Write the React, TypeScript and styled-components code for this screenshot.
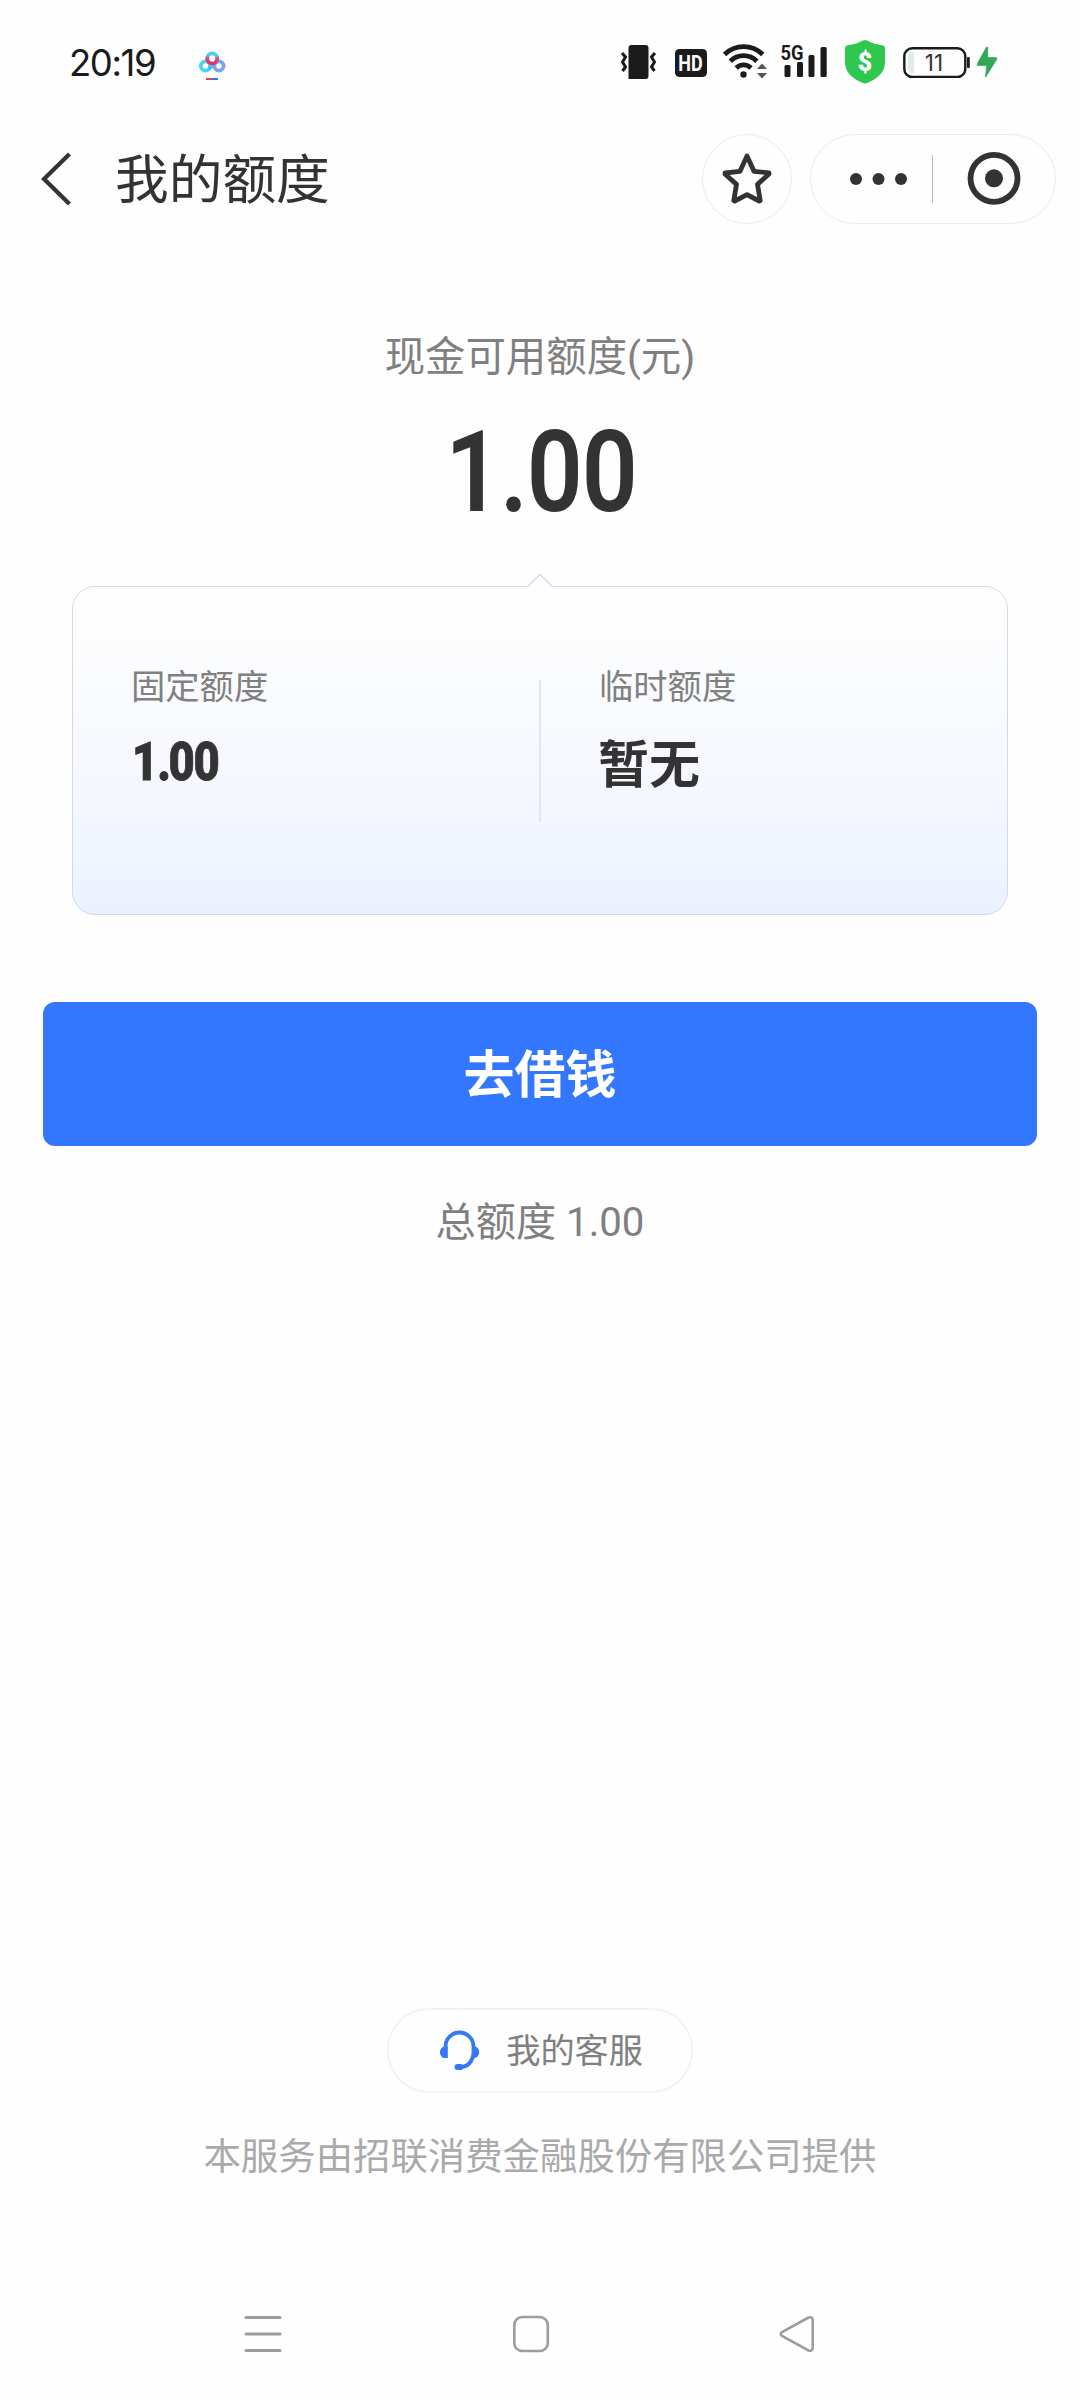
import React from "react";
import styled, { createGlobalStyle } from "styled-components";

const Global = createGlobalStyle`
  * { box-sizing: border-box; }
  body { margin: 0; background: #fefefe; }
`;

const Screen = styled.div`
  width: 1080px;
  height: 2400px;
  display: flex;
  flex-direction: column;
  background: #fefefe;
  color: #333;
  font-family: Roboto, "Noto Sans CJK SC", sans-serif;
  overflow: hidden;
`;

const StatusBar = styled.header`
  height: 124px;
  flex: none;
  padding: 0 81px 0 69px;
  display: flex;
  align-items: flex-start;
`;

const Clock = styled.div`
  width: 126px;
  padding-top: 39px;
  font: 430 36.5px/48px Inter, sans-serif;
  letter-spacing: -1.4px;
  color: #1a1a1a;
`;

const Spacer = styled.div`
  flex: 1;
`;

const StatusIcon = styled.svg<{ $gap?: number }>`
  display: block;
  flex: none;
  height: 60px;
  margin-top: 32px;
  margin-left: ${(p) => p.$gap ?? 0}px;
  overflow: visible;
`;

const HdBadge = styled.div`
  width: 32px;
  height: 28px;
  flex: none;
  margin: 49px 0 0 17px;
  border-radius: 4.5px;
  background: #1b1b1b;
  color: #fff;
  display: flex;
  align-items: center;
  justify-content: center;
  font: 700 20px/28px Roboto, sans-serif;
`;

const HdText = styled.span`
  transform: scale(0.9, 1.12);
`;

const TitleBar = styled.nav`
  height: 110px;
  flex: none;
  padding: 0 24px 0 38px;
  display: flex;
  align-items: center;
`;

const Title = styled.h1`
  margin: 0 auto 0 41px;
  padding-top: 3px;
  font-size: 53.7px;
  font-weight: 400;
  line-height: 80px;
`;

const RoundButton = styled.button<{ $width: number }>`
  width: ${(p) => p.$width}px;
  height: 90px;
  padding: 0;
  margin-left: 18px;
  border: 1px solid #ebebeb;
  border-radius: 45px;
  background: #fefefe;
  display: flex;
  align-items: center;
  justify-content: center;
`;

const Summary = styled.section`
  height: 352px;
  flex: none;
  display: flex;
  flex-direction: column;
  align-items: center;
  padding-top: 94px;
`;

const SummaryLabel = styled.div`
  font-size: 40.4px;
  line-height: 60px;
  color: #808080;
`;

const Amount = styled.div<{ $size: number; $squeeze: number; $weight: number; $outline: number }>`
  display: flex;
  width: max-content;
  font-family: Roboto, sans-serif;
  font-size: ${(p) => p.$size}px;
  font-weight: ${(p) => p.$weight};
  line-height: 1;
  transform: scaleX(${(p) => p.$squeeze});
  -webkit-text-stroke: ${(p) => p.$outline}px #333;
`;

const Glyph = styled.span<{ $width: number }>`
  width: ${(p) => p.$width}em;
  display: flex;
  justify-content: center;
`;

const MainAmount = styled.div`
  margin-top: 27px;
  padding-left: 2px;
`;

const Card = styled.section`
  position: relative;
  height: 329px;
  flex: none;
  margin: 0 72px;
  border: 1px solid #d3d9ea;
  border-radius: 23px;
  background: linear-gradient(#fefefe 8%, #f6f8fe 55%, #f1f5fe 80%, #eaf1fe);
  display: flex;
`;

const Pointer = styled.svg`
  position: absolute;
  left: 453px;
  top: -14px;
  display: block;
`;

const Column = styled.div`
  flex: 1;
  padding: 74px 0 0 58px;
`;

const ColumnLabel = styled.div`
  font-size: 34.3px;
  line-height: 52px;
  color: #808080;
`;

const NumberValue = styled.div`
  margin-top: 22px;
  display: flex;
  & > * {
    transform-origin: left center;
  }
`;

const TextValue = styled.div`
  margin: 15px 0 0 -1px;
  font-size: 51px;
  line-height: 76px;
  font-weight: 700;
`;

const Divider = styled.div`
  width: 2px;
  height: 142px;
  margin-top: 93px;
  background: #dfe7f3;
`;

const BorrowButton = styled.button`
  height: 144px;
  flex: none;
  margin: 87px 43px 0;
  padding: 0 0 6px;
  border: 0;
  border-radius: 12px;
  background: #3377ff;
  color: #fff;
  font: 700 51px/76px "Noto Sans CJK SC", sans-serif;
`;

const Total = styled.div`
  margin-top: 47px;
  font-size: 40.2px;
  line-height: 60px;
  text-align: center;
  color: #808080;
`;

const Footer = styled.footer`
  display: flex;
  flex-direction: column;
  align-items: center;
`;

const ServiceButton = styled.button`
  width: 306px;
  height: 85px;
  padding: 0 48px 5px 50px;
  border: 2px solid #f3f3f3;
  border-radius: 42px;
  background: #fefefe;
  display: flex;
  align-items: center;
  justify-content: space-between;
  color: #808080;
  font: 400 34.2px/52px "Noto Sans CJK SC", sans-serif;
`;

const ServiceIcon = styled.svg`
  display: block;
  margin-top: 6px;
`;

const Provider = styled.div`
  margin-top: 36px;
  font-size: 37.4px;
  line-height: 56px;
  color: #aaa;
`;

const SystemNav = styled.div`
  margin-top: 129px;
  height: 86px;
  flex: none;
  padding: 0 264px 0 243px;
  display: flex;
  justify-content: space-between;
`;

const ink = "#1b1b1b";

function Money({ size, squeeze, weight, outline = 0, one, dot, zero }: {
  size: number; squeeze: number; weight: number; outline?: number; one: number; dot: number; zero: number;
}) {
  return (
    <Amount $size={size} $squeeze={squeeze} $weight={weight} $outline={outline}>
      <Glyph $width={one}>1</Glyph>
      <Glyph $width={dot}>.</Glyph>
      <Glyph $width={zero}>0</Glyph>
      <Glyph $width={zero}>0</Glyph>
    </Amount>
  );
}

export default function App() {
  return (
    <>
      <Global />
      <Screen>
        <StatusBar>
          <Clock>20:19</Clock>
          <StatusIcon width="34" viewBox="195 32 34 60" fill="none" strokeWidth="3.8">
            <defs>
              <linearGradient id="ring" x1="0" y1="0" x2="0" y2="1">
                <stop offset="0.2" stopColor="#4fcdf0" />
                <stop offset="0.5" stopColor="#d9488c" />
                <stop offset="1" stopColor="#f02d62" />
              </linearGradient>
            </defs>
            <circle cx="205.4" cy="66" r="4.6" stroke="#4fd2ef" />
            <circle cx="219" cy="66" r="4.6" stroke="#7aa5ea" />
            <path d="M208.5 69.5L214.5 63.5" stroke="#4bbdf0" />
            <circle cx="212.2" cy="58.4" r="5" stroke="url(#ring)" />
            <path d="M206 79h6" stroke="#ee4056" strokeWidth="2" />
            <path d="M212 79h6" stroke="#267bea" strokeWidth="2" />
          </StatusIcon>
          <Spacer />
          <StatusIcon width="38" viewBox="620 32 38 60" fill="none" stroke={ink}>
            <path d="M631.500 45h14q3 0 3 3v28q0 3-3 3h-17v-31q0-3 3-3z" fill={ink} stroke="none" />
            <path d="M622 53l3.5 4-3 5 3 5-3 4M655 53l-3.5 4 3 5-3 5 3 4" strokeWidth="3" />
          </StatusIcon>
          <HdBadge><HdText>HD</HdText></HdBadge>
          <StatusIcon width="46" $gap={15} viewBox="722 32 46 60" fill="none" stroke={ink} strokeWidth="4.8">
            <path d="M724.5 54.5a27.2 27.2 0 0 1 38.2 0" />
            <path d="M730.3 61.2a18.8 18.8 0 0 1 26.6 0" />
            <path d="M736.2 68a10.4 10.4 0 0 1 14.8 0" />
            <circle cx="743.5" cy="74.5" r="3.2" fill={ink} stroke="none" />
            <path d="M757 69l5-5.500 5 5.500zM757 73h10l-5 5.500z" fill="#555" stroke="none" />
          </StatusIcon>
          <StatusIcon width="48" $gap={12} viewBox="780 32 48 60" fill={ink}>
            <text x="780.5" y="60" textLength="23" lengthAdjust="spacingAndGlyphs" fontFamily="Roboto" fontWeight="700" fontSize="20.5">5G</text>
            <rect x="784.500" y="65" width="6" height="12" rx="1.500" />
            <rect x="797" y="62" width="6" height="15" rx="1.500" />
            <rect x="808.500" y="55" width="6" height="22" rx="1.500" />
            <rect x="820.500" y="47" width="6.200" height="30" rx="1.500" />
          </StatusIcon>
          <StatusIcon width="42" $gap={16} viewBox="844 32 42 60">
            <path d="M865 40q1 0 2 .6c5 2.700 9.500 4.100 15 4.600q3 .3 3 3.300v14c0 10-8.500 17-18 20.500q-2 .8-4 0c-9.500-3.500-18-10.500-18-20.500v-14q0-3 3-3.300c5.500-.5 10-1.900 15-4.600q1-.6 2-.6z" fill="#2fc84f" />
            <text x="865" y="70.500" textAnchor="middle" fill="#fff" fontFamily="Roboto" fontWeight="900" fontSize="25">$</text>
          </StatusIcon>
          <StatusIcon width="68" $gap={17} viewBox="903 32 68 60">
            <rect x="904.300" y="48.300" width="61" height="28.600" rx="8" fill="none" stroke={ink} strokeWidth="2.400" />
            <path d="M914 52h-2q-4 0-4 4v13q0 4 4 4h2z" fill="#dfeee5" />
            <text x="934" y="71" textAnchor="middle" fill="#333" fontFamily="Inter" fontSize="22.500">11</text>
            <rect x="967" y="57" width="2.800" height="11" rx="1" fill={ink} />
          </StatusIcon>
          <StatusIcon width="22" $gap={6} viewBox="977 32 22 60">
            <path d="M986.500 47l-9.300 17q-.5 1.500 1 1.600h8.500l-1.200 11.600 11.300-18q.6-1.500-1-1.600h-8.300l.3-10.200z" fill="#34a855" stroke="#34a855" strokeWidth=".8" />
          </StatusIcon>
        </StatusBar>

        <TitleBar>
          <svg width="36" height="60" viewBox="38 149 36 60" fill="none" stroke="#333" strokeWidth="4.200">
            <path d="M69.500 154L44 179l25.500 25" />
          </svg>
          <Title>我的额度</Title>
          <RoundButton $width={90} aria-label="收藏">
            <svg width="56" height="58" viewBox="719 150 56 58" fill="none" stroke="#333" strokeWidth="4.800" strokeLinejoin="round">
              <path d="M747 156l7 15.300 15 1.700v1l-11.500 10.400 2.700 16.100-1 .5-12.200-6.300-12.200 6.300-1-.5 2.700-16.100-11.500-10.400v-1l15-1.700z" />
            </svg>
          </RoundButton>
          <RoundButton $width={246} aria-label="菜单">
            <svg width="240" height="80" viewBox="813 139 240 80" fill="#333">
              <circle cx="856" cy="179" r="6" />
              <circle cx="878.500" cy="179" r="6" />
              <circle cx="901" cy="179" r="6" />
              <rect x="932" y="155" width="1" height="48" fill="#bbb" />
              <circle cx="994" cy="178.300" r="23.500" fill="none" stroke="#333" strokeWidth="5.800" />
              <circle cx="994" cy="178.300" r="9" />
            </svg>
          </RoundButton>
        </TitleBar>

        <Summary>
          <SummaryLabel>现金可用额度(元)</SummaryLabel>
          <MainAmount>
            <Money size={114} squeeze={0.86} weight={600} one={0.562} dot={0.27} zero={0.562} />
          </MainAmount>
        </Summary>

        <Card>
          <Pointer width="28" height="15" viewBox="526 573 28 15">
            <path d="M527 587l13-12.500 13 12.500v1h-26z" fill="#fefefe" />
            <path d="M527 587l13-12.500 13 12.500" fill="none" stroke="#d3d9ea" strokeWidth="1.400" />
          </Pointer>
          <Column>
            <ColumnLabel>固定额度</ColumnLabel>
            <NumberValue>
              <Money size={54} squeeze={0.84} weight={900} outline={0.8} one={0.62} dot={0.22} zero={0.551} />
            </NumberValue>
          </Column>
          <Divider />
          <Column>
            <ColumnLabel>临时额度</ColumnLabel>
            <TextValue>暂无</TextValue>
          </Column>
        </Card>

        <BorrowButton>去借钱</BorrowButton>
        <Total>总额度 1.00</Total>
        <Spacer />

        <Footer>
          <ServiceButton>
            <ServiceIcon width="42" height="42" viewBox="439 2030 42 42" fill="none" stroke="#3478f6" strokeWidth="3.800">
              <path d="M445.500 2049v-2.500a14 14 0 0 1 28 0v6.500q-1.500 14-15 14.500" />
              <path d="M447.800 2046.500h-3a4.900 5.800 0 0 0 0 11.600h3zM472 2046.500h2.500a4.800 5.700 0 0 1 0 11.400h-2.500z" fill="#3478f6" stroke="none" />
              <path d="M457.500 2067h3" strokeWidth="5.800" strokeLinecap="round" />
            </ServiceIcon>
            我的客服
          </ServiceButton>
          <Provider>本服务由招联消费金融股份有限公司提供</Provider>
        </Footer>

        <SystemNav>
          <svg width="40" height="40" viewBox="243 2314 40 40" stroke="#9d9d9d" strokeWidth="3" strokeLinecap="round">
            <path d="M246 2317.500h34M246 2334h34M246 2350.500h34" />
          </svg>
          <svg width="40" height="40" viewBox="510 2314 40 40" fill="none" stroke="#9d9d9d" strokeWidth="2.600">
            <rect x="514.300" y="2317" width="33.500" height="34" rx="8" />
          </svg>
          <svg width="40" height="40" viewBox="776 2314 40 40" fill="none" stroke="#9d9d9d" strokeWidth="2.600">
            <path d="M782 2332q-2.500 2 0 4l26.500 14.500q4 1 4.200-2.500v-28q-.2-3.500-4.200-2.500z" />
          </svg>
        </SystemNav>
      </Screen>
    </>
  );
}
